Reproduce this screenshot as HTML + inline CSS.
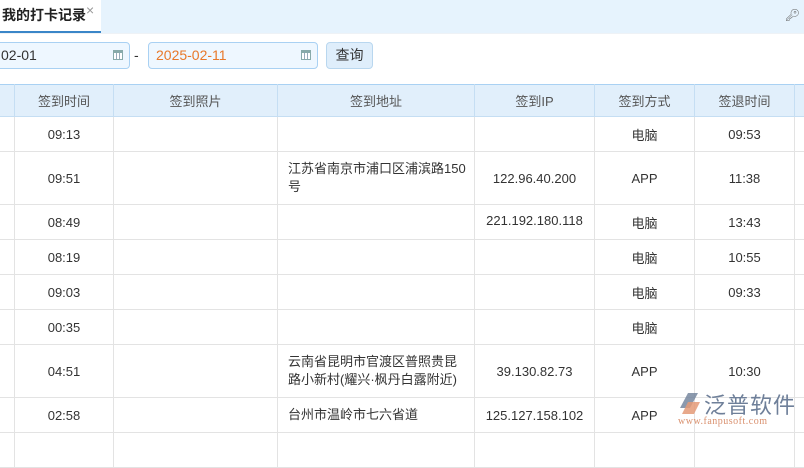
<!DOCTYPE html><html><head><style>
body{margin:0;width:804px;height:437px;overflow:hidden;background:#fff;font-family:"Liberation Sans","Noto Sans CJK SC",sans-serif;font-size:13px;color:#333;position:relative}
.tabbar{position:absolute;left:0;top:0;width:804px;height:33px;background:#e6f3fd;border-bottom:1px solid #eef2f6}
.tab{position:absolute;left:0;top:0;width:101px;height:33px;background:#fff;border-bottom:2px solid #3a86c8;font-size:14px;color:#222;font-weight:bold;line-height:31px;padding-left:2px;box-sizing:border-box}
.x{position:absolute;left:86px;top:2px;color:#999;font-size:14px;font-weight:normal;line-height:16px}
.inp{position:absolute;top:42px;height:27px;border:1px solid #a9d1f3;border-radius:4px;background:#eef7ff;box-sizing:border-box;line-height:25px;font-size:14px}
.cal{position:absolute;right:6px;top:7px;width:10px;height:10px;border:1px solid #8aa;border-top:3px solid #8aa;box-sizing:border-box;background:repeating-linear-gradient(90deg,#fff 0 2px,#9ab 2px 3px)}
.btn{position:absolute;left:326px;top:42px;width:47px;height:27px;border:1px solid #b9d7ef;border-radius:4px;background:#dfeefb;box-sizing:border-box;text-align:center;line-height:25px;font-size:14px;color:#333}
table{position:absolute;left:-86px;top:84px;border-collapse:collapse;table-layout:fixed;width:920px}
td,th{border:1px solid #e3e3e3;text-align:center;font-size:13px;padding:0}
th{background:#e1effb;color:#555;font-weight:normal;height:31px;border-color:#c5def3;border-top:1px solid #a9d1f3}
td.l{text-align:left;padding-left:10px;padding-right:8px;line-height:18px}
</style></head><body>
<div class="tabbar"><div class="tab">我的打卡记录<span class="x">×</span></div>
<span style="position:absolute;right:4px;top:8px;color:#666;font-size:12px">&#x1F511;&#xFE0E;</span></div>
<div class="inp" style="left:-10px;width:140px;padding-left:10px">02-01<span class="cal"></span></div>
<span style="position:absolute;left:134px;top:47px;font-size:14px">-</span>
<div class="inp" style="left:148px;width:170px;padding-left:7px;color:#e8782a">2025-02-11<span class="cal"></span></div>
<div class="btn">查询</div>
<table>
<colgroup><col style="width:100px"><col style="width:99px"><col style="width:164px"><col style="width:197px"><col style="width:120px"><col style="width:100px"><col style="width:100px"><col style="width:40px"></colgroup>
<tr><th></th><th>签到时间</th><th>签到照片</th><th>签到地址</th><th>签到IP</th><th>签到方式</th><th>签退时间</th><th></th></tr>
<tr style="height:35px"><td></td><td>09:13</td><td></td><td></td><td></td><td>电脑</td><td>09:53</td><td></td></tr>
<tr style="height:53px"><td></td><td>09:51</td><td></td><td class="l">江苏省南京市浦口区浦滨路150号</td><td>122.96.40.200</td><td>APP</td><td>11:38</td><td></td></tr>
<tr style="height:35px"><td></td><td>08:49</td><td></td><td></td><td style="vertical-align:top;padding-top:8px">221.192.180.118</td><td>电脑</td><td>13:43</td><td></td></tr>
<tr style="height:35px"><td></td><td>08:19</td><td></td><td></td><td></td><td>电脑</td><td>10:55</td><td></td></tr>
<tr style="height:35px"><td></td><td>09:03</td><td></td><td></td><td></td><td>电脑</td><td>09:33</td><td></td></tr>
<tr style="height:35px"><td></td><td>00:35</td><td></td><td></td><td></td><td>电脑</td><td></td><td></td></tr>
<tr style="height:53px"><td></td><td>04:51</td><td></td><td class="l">云南省昆明市官渡区普照贵昆路小新村(耀兴·枫丹白露附近)</td><td>39.130.82.73</td><td>APP</td><td>10:30</td><td></td></tr>
<tr style="height:35px"><td></td><td>02:58</td><td></td><td class="l">台州市温岭市七六省道</td><td>125.127.158.102</td><td>APP</td><td></td><td></td></tr>
<tr style="height:35px"><td></td><td></td><td></td><td></td><td></td><td></td><td></td><td></td></tr>
</table>
<div style="position:absolute;left:676px;top:390px;width:122px;height:40px">
<svg width="26" height="26" style="position:absolute;left:0;top:0"><path d="M4 18 L12 3 L22 3 L14 18 Z" fill="#6e7f99" opacity=".8"/><path d="M12 12 L24 12 L18 24 L6 24 Z" fill="#e49a77" opacity=".85"/></svg>
<span style="position:absolute;left:28px;top:-2px;font-size:22px;color:#6e7f99;letter-spacing:1px">泛普软件</span>
<span style="position:absolute;left:2px;top:26px;font-size:10px;color:#d9906e;font-family:'Liberation Serif',serif;letter-spacing:.5px">www.fanpusoft.com</span>
</div>
</body></html>
